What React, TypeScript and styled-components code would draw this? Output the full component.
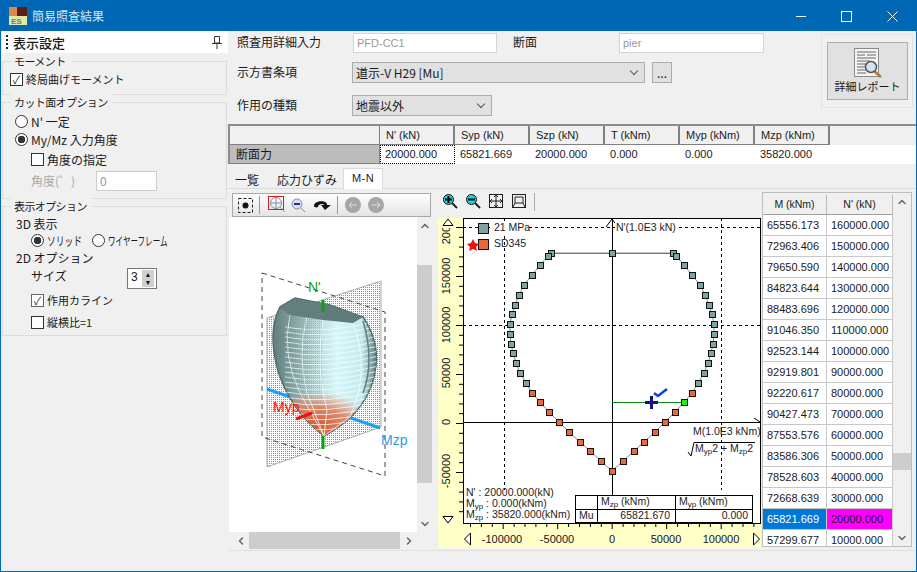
import React from 'react'
import styled, { createGlobalStyle } from 'styled-components'
import { ChevronDown, ChevronLeft, ChevronRight, ChevronUp } from 'lucide-react'

const GlobalStyle = createGlobalStyle`
  html, body {
    margin: 0;
    padding: 0;
    width: 917px;
    height: 572px;
    overflow: hidden;
    background: #f0f0f0;
  }
  * {
    box-sizing: border-box;
  }
`

const TEXT = '#1a1a1a'
const FONT = '"Noto Sans CJK JP", "Liberation Sans", sans-serif'
const LATIN = '"Liberation Sans", sans-serif'

const forces = ['20000.000', '65821.669', '20000.000', '0.000', '0.000', '35820.000']
const forceHeads = ["N' (kN)", 'Syp (kN)', 'Szp (kN)', 'T (kNm)', 'Myp (kNm)', 'Mzp (kNm)']
const rows = [
  ['65556.173', '160000.000'],
  ['72963.406', '150000.000'],
  ['79650.590', '140000.000'],
  ['84823.644', '130000.000'],
  ['88483.696', '120000.000'],
  ['91046.350', '110000.000'],
  ['92523.144', '100000.000'],
  ['92919.801', '90000.000'],
  ['92220.617', '80000.000'],
  ['90427.473', '70000.000'],
  ['87553.576', '60000.000'],
  ['83586.306', '50000.000'],
  ['78528.603', '40000.000'],
  ['72668.639', '30000.000'],
  ['65821.669', '20000.000'],
  ['57299.677', '10000.000'],
]

// interaction curve points, in page pixels read off the reference
const leftPts = [
  [551, 253], [548, 256], [540, 265], [532, 275], [524, 285], [519, 295], [515, 305], [512, 314],
  [510, 324], [510, 334], [511, 344], [513, 353], [516, 363], [520, 373], [526, 383],
]
const rightPts = [
  [673, 253], [676, 256], [684, 265], [692, 275], [700, 285], [705, 295], [709, 305], [712, 314],
  [714, 324], [714, 334], [713, 344], [711, 353], [708, 363], [704, 373], [698, 383],
]
const greyPts = [[612, 253], ...leftPts, ...rightPts]
const redPts = [
  [532, 393], [540, 402], [549, 412], [559, 422], [569, 432], [580, 442], [590, 451], [601, 461],
  [612, 471], [623, 461], [634, 451], [644, 442], [655, 432], [665, 422], [675, 412], [692, 393],
]
const outline = [
  ...leftPts.slice().reverse(),
  [673, 253],
  ...rightPts.slice(1),
  [692, 393], [684, 402], [675, 412], [665, 422], [655, 432], [644, 442], [634, 451], [623, 461], [612, 471],
  [601, 461], [590, 451], [580, 442], [569, 432], [559, 422], [549, 412], [540, 402], [532, 393], [526, 383],
]

const Sub = ({ children }: { children: React.ReactNode }) => (
  <tspan fontSize="8" dy="2">{children}</tspan>
)

const Diagram3D = () => (
  <svg width="170" height="210" viewBox="0 0 170 210">
    <defs>
      <pattern id="dots" width="2" height="2" patternUnits="userSpaceOnUse">
        <rect width="1" height="1" fill="#8c8c8c" />
      </pattern>
      <linearGradient id="body" x1="0" y1="0" x2="1" y2="0">
        <stop offset="0" stopColor="#5f7a7a" />
        <stop offset="0.22" stopColor="#8aa6a6" />
        <stop offset="0.42" stopColor="#bcdada" />
        <stop offset="0.62" stopColor="#d6f6f8" />
        <stop offset="0.86" stopColor="#c4eaec" />
        <stop offset="1" stopColor="#5f7e80" />
      </linearGradient>
      <radialGradient id="heat" cx="0.45" cy="0.75" r="0.7">
        <stop offset="0" stopColor="#d9552b" />
        <stop offset="0.55" stopColor="#e2704a" stopOpacity="0.8" />
        <stop offset="1" stopColor="#e8805a" stopOpacity="0" />
      </radialGradient>
      <clipPath id="bodyClip">
        <path d="M29 36 L44 27 L79 34 L112 46 Q128 70 125 95 Q120 140 73 165 Q40 140 27 100 Q16 60 29 36 Z" />
      </clipPath>
    </defs>
    <polygon points="16,47 130,10 130,156 16,196" fill="url(#dots)" stroke="#aaa" />
    <polyline points="11,2 134,41 134,205 11,166 11,2" fill="none" stroke="#444" strokeDasharray="5 4" />
    <line x1="16" y1="118" x2="129" y2="157" stroke="#1ea1ee" strokeWidth="3" />
    <path d="M29 36 L44 27 L79 34 L112 46 Q128 70 125 95 Q120 140 73 165 Q40 140 27 100 Q16 60 29 36 Z" fill="url(#body)" stroke="#50696a" strokeWidth="1.5" />
    <g clipPath="url(#bodyClip)">
      <rect x="30" y="118" width="80" height="50" fill="url(#heat)" />
      <g stroke="#f0ffff" fill="none" strokeWidth="0.8">
        {Array.from({ length: 21 }).map((_, i) => (
          <path key={i} d={`M34 ${56 + i * 5} Q72 ${64 + i * 5} 128 ${50 + i * 5}`} />
        ))}
        <path d="M39 44 Q30 82 49 122 L73 165" />
        <path d="M56 46 Q46 82 56 122 L73 165" />
        <path d="M72 49 Q64 100 76 139 L73 165" />
        <path d="M102 52 Q120 100 99 146 L73 165" />
      </g>
      <path d="M112 50 Q124 90 112 122" fill="none" stroke="#5f7e80" strokeWidth="1.5" />
      <path d="M29 37 L44 27 L79 34 L112 46 L102 52 L72 49 L39 44 Z" fill="#5f7b7a" />
      <rect x="16" y="27" width="56" height="100" fill="url(#dots)" opacity="0.45" />
    </g>
    <line x1="72" y1="29" x2="72" y2="41" stroke="#0ea012" strokeWidth="3" />
    <line x1="72" y1="165" x2="72" y2="178" stroke="#0ea012" strokeWidth="3" />
    <line x1="45" y1="148" x2="61" y2="142" stroke="#ee1111" strokeWidth="3" />
    <SvgLabel x="57" y="21" fill="#0ea012">N'</SvgLabel>
    <SvgLabel x="22" y="141" fill="#ee1111">Myp</SvgLabel>
    <SvgLabel x="130" y="174" fill="#1ea1ee">Mzp</SvgLabel>
  </svg>
)

const Chart = () => (
  <svg width="327" height="330" viewBox="434 218 327 330">
    <rect x="438" y="218" width="323" height="330" fill="#ffffc8" />
    <rect x="463.5" y="218.5" width="297" height="305" fill="#fff" stroke="#000" />
    {/* dashed grid */}
    <g stroke="#000" strokeDasharray="3 3">
      <line x1="463" y1="227.5" x2="760" y2="227.5" />
      <line x1="463" y1="325.5" x2="760" y2="325.5" />
      <line x1="504.5" y1="218" x2="504.5" y2="490" />
      <line x1="721.5" y1="218" x2="721.5" y2="490" />
    </g>
    {/* ticks */}
    <g stroke="#000">
      {Array.from({ length: 27 }).map((_, i) => (
        <line key={i} x1={470.5 + i * 10.9} y1="523" x2={470.5 + i * 10.9} y2={(i - 13) % 5 === 0 ? 529 : 527} />
      ))}
      {Array.from({ length: 30 }).map((_, i) => (
        <line key={i} x1={(i - 10) % 5 === 0 ? 456 : 459} y1={227.5 + i * 9.8} x2="463" y2={227.5 + i * 9.8} />
      ))}
    </g>
    {/* axes */}
    <g stroke="#000">
      <line x1="612.5" y1="218" x2="612.5" y2="523" />
      <line x1="463" y1="422.5" x2="760" y2="422.5" />
    </g>
    <path d="M606 227 L612 219 L618 227" fill="none" stroke="#000" />
    <path d="M754 418 L760 422" fill="none" stroke="#000" />
    <polyline points={outline.map(p => p.join(',')).join(' ')} stroke="#8a8a8a" fill="none" />
    <line x1="551" y1="253.5" x2="673" y2="253.5" stroke="#777" />
    {greyPts.map(([x, y], i) => (
      <Point key={i} x={x - 2.5} y={y - 2.5} fill="#7fa3a3" />
    ))}
    {redPts.map(([x, y], i) => (
      <Point key={i} x={x - 2.5} y={y - 2.5} fill="#e8693d" />
    ))}
    <line x1="612" y1="402.5" x2="684" y2="402.5" stroke="#0a8a0a" />
    <Point x="681.5" y="399.5" fill="#22ee22" />
    <path d="M645 402.5 H658 M651.5 396 V409" stroke="#10108c" strokeWidth="3" />
    <path d="M654 393 L658 396 L667 389" stroke="#1040e0" strokeWidth="2.5" fill="none" />
    {/* legend */}
    <rect x="478.5" y="223.5" width="10" height="10" fill="#7fa3a3" stroke="#111" />
    <rect x="478.5" y="239.5" width="10" height="10" fill="#e8693d" stroke="#111" />
    <polygon points="473,239 475,243 479,244 476,247 477,251 473,249 469,251 470,247 467,244 471,243" fill="#ee1111" />
    <LabelBack x="490" y="222" width="38" height="11" />
    <LabelBack x="615" y="222" width="64" height="11" />
    <ChartText x="494" y="231">21 MPa</ChartText>
    <ChartText x="494" y="247">SD345</ChartText>
    <ChartText x="616" y="231">N'(1.0E3 kN)</ChartText>
    <ChartText x="693" y="435">M(1.0E3 kNm)</ChartText>
    <ChartText x="695" y="452">
      M<Sub>yp</Sub><tspan dy="-2">2 + M</tspan><Sub>zp</Sub><tspan dy="-2">2</tspan>
    </ChartText>
    <path d="M688 452 L691 456 L694 442.5 H755" stroke="#000" fill="none" />
    <ChartText x="466" y="496">N' : 20000.000(kN)</ChartText>
    <ChartText x="466" y="507">
      M<Sub>yp</Sub><tspan dy="-2"> : 0.000(kNm)</tspan>
    </ChartText>
    <ChartText x="466" y="518">
      M<Sub>zp</Sub><tspan dy="-2"> : 35820.000(kNm)</tspan>
    </ChartText>
    {/* result table */}
    <rect x="575.5" y="495.5" width="177" height="27" fill="#fff" stroke="#000" />
    <path d="M575 509.5 H753 M597.5 495 V523 M675.5 495 V523" stroke="#000" />
    <ChartText x="601" y="505">
      M<Sub>zp</Sub><tspan dy="-2"> (kNm)</tspan>
    </ChartText>
    <ChartText x="679" y="505">
      M<Sub>yp</Sub><tspan dy="-2"> (kNm)</tspan>
    </ChartText>
    <ChartText x="579" y="519">Mu</ChartText>
    <ChartText x="670" y="519" textAnchor="end">65821.670</ChartText>
    <ChartText x="748" y="519" textAnchor="end">0.000</ChartText>
    {/* axis labels */}
    <AxisText x="612" y="543" textAnchor="middle">0</AxisText>
    <AxisText x="557" y="543" textAnchor="middle">-50000</AxisText>
    <AxisText x="666" y="543" textAnchor="middle">50000</AxisText>
    <AxisText x="502" y="543" textAnchor="middle">-100000</AxisText>
    <AxisText x="721" y="543" textAnchor="middle">100000</AxisText>
    {[
      ['200000', 226],
      ['150000', 276],
      ['100000', 325],
      ['50000', 373],
      ['0', 422],
      ['-50000', 471],
    ].map(([t, y]) => (
      <AxisText key={t} x="0" y="0" textAnchor="middle" transform={`translate(450 ${y}) rotate(-90)`}>
        {t}
      </AxisText>
    ))}
    <rect x="438" y="218" width="18" height="10" fill="#ffffc8" />
    {/* arrows */}
    <g fill="#fff" stroke="#000">
      <polygon points="443,225.5 453,225.5 448,219" />
      <polygon points="443,516.5 453,516.5 448,523" />
      <polygon points="470.5,533 464.5,539 470.5,545" />
      <polygon points="753.5,533 759.5,539 753.5,545" />
    </g>
  </svg>
)

const ToolIcon = ({ kind }: { kind: 'plus' | 'minus' }) => (
  <svg width="16" height="16" viewBox="0 0 16 16">
    <line x1="10" y1="10" x2="15" y2="15" stroke="#222" strokeWidth="2" />
    <circle cx="6.5" cy="6.5" r="5" fill="#20d0e0" stroke="#111" />
    <path d={kind === 'plus' ? 'M3 6.5H10M6.5 3V10' : 'M3 6.5H10'} stroke="#000" strokeWidth="2" />
  </svg>
)

export default function App() {
  return (
    <>
      <GlobalStyle />
      <Window>
        <TitleBar>
          <AppIcon>
            <svg width="18" height="18" viewBox="0 0 18 18">
              <rect width="18" height="18" fill="#5a1c14" />
              <rect x="0" y="0" width="8" height="9" fill="#d88a50" />
              <rect y="9" width="18" height="9" fill="#e8e6a0" />
              <IconText x="2" y="16.5">ES</IconText>
            </svg>
          </AppIcon>
          <TitleText>簡易照査結果</TitleText>
          <WinButtons>
            <svg width="136" height="30" viewBox="0 0 136 30" fill="none" stroke="#fff">
              <path d="M19 15.5H29" />
              <rect x="64.5" y="10.5" width="10" height="10" />
              <path d="M110.5 10.5L120.5 20.5M120.5 10.5L110.5 20.5" />
            </svg>
          </WinButtons>
        </TitleBar>
        <Body>
          <Side>
            <SideHead>
              <Grip />
              <SideTitle>表示設定</SideTitle>
              <svg width="10" height="14" viewBox="0 0 10 14" fill="none" stroke="#333">
                <path d="M2.5 1.5H7.5V8H2.5ZM0 8.5H10M5 9V14" />
              </svg>
            </SideHead>
            <Group $h={34}>
              <Legend>モーメント</Legend>
              <Line $indent={7} $top={0} $small>
                <Check>✓</Check>終局曲げモーメント
              </Line>
            </Group>
            <Group $h={97}>
              <Legend>カット面オプション</Legend>
              <Line $indent={12} $top={1}>
                <Radio />N' 一定
              </Line>
              <Line $indent={12} $top={0}>
                <Radio $on />My/Mz 入力角度
              </Line>
              <Line $indent={28} $top={1}>
                <Check />角度の指定
              </Line>
              <Line $indent={28} $top={3} $muted>
                <AngleLabel>角度(゜)</AngleLabel>
                <AngleInput>0</AngleInput>
              </Line>
            </Group>
            <Group $h={130}>
              <Legend>表示オプション</Legend>
              <Line $indent={13} $top={-1}>3D 表示</Line>
              <Line $indent={28} $top={-1.5}>
                <Radio $on />
                <Narrow $w={45} $sx={0.73}>ソリッド</Narrow>
                <Radio />
                <Narrow $w={62} $sx={0.63}>ワイヤーフレーム</Narrow>
              </Line>
              <Line $indent={13} $top={-1.5}>2D オプション</Line>
              <Line $indent={28} $top={2.5}>
                <SizeLabel>サイズ</SizeLabel>
                <Spin>
                  3
                  <SpinArrows>
                    <SpinArrow>▲</SpinArrow>
                    <SpinArrow>▼</SpinArrow>
                  </SpinArrows>
                </Spin>
              </Line>
              <Line $indent={28} $top={3.5} $small>
                <Check $muted>✓</Check>作用カライン
              </Line>
              <Line $indent={28} $top={3.5} $small>
                <Check />縦横比=1
              </Line>
            </Group>
          </Side>
          <Main>
            <Form>
              <FormRows>
                <FormRow $h={20} $top={0}>
                  <FieldLabel>照査用詳細入力</FieldLabel>
                  <Input $w={144}>PFD-CC1</Input>
                  <SecLabel>断面</SecLabel>
                  <Input $w={145}>pier</Input>
                </FormRow>
                <FormRow $h={21} $top={9}>
                  <FieldLabel>示方書条項</FieldLabel>
                  <Select $w={293}>
                    道示-V H29 [Mu]
                    <Chevron />
                  </Select>
                  <DotsButton>...</DotsButton>
                </FormRow>
                <FormRow $h={21} $top={12}>
                  <FieldLabel>作用の種類</FieldLabel>
                  <Select $w={140}>
                    地震以外
                    <Chevron />
                  </Select>
                </FormRow>
              </FormRows>
              <ReportBox>
                <ReportButton>
                  <svg width="30" height="30" viewBox="0 0 30 30">
                    <rect x="1.5" y="0.5" width="24" height="28" fill="#f4f4f4" stroke="#8a8a8a" />
                    <g stroke="#666">
                      <path d="M4 4H23M4 7H12M14 7H23M4 10H23M4 13H17M4 16H13M4 19H12M4 22H13M4 25H13" />
                    </g>
                    <line x1="21" y1="23" x2="28" y2="29" stroke="#b07830" strokeWidth="2.5" />
                    <circle cx="18" cy="19" r="5.5" fill="#cfe6f2" stroke="#555" strokeWidth="1.5" />
                  </svg>
                  <ReportText>詳細レポート</ReportText>
                </ReportButton>
              </ReportBox>
            </Form>
            <ForceGrid>
              <HeadRow>
                <RowHead $head />
                {forceHeads.map(h => (
                  <ColHead key={h}>{h}</ColHead>
                ))}
                <Filler />
              </HeadRow>
              <ValueRow>
                <RowHead>断面力</RowHead>
                {forces.map((f, i) => (
                  <ForceCell key={i} $focus={i === 0}>{f}</ForceCell>
                ))}
                <Filler $white />
              </ValueRow>
            </ForceGrid>
            <Tabs>
              <Tab>一覧</Tab>
              <Tab>応力ひずみ</Tab>
              <Tab $active>M-N</Tab>
            </Tabs>
            <Panes>
              <Pane3D>
                <Toolbar3D>
                  <svg width="186" height="20" viewBox="0 0 186 20" fill="none">
                    <rect x="5.5" y="3.5" width="14" height="14" stroke="#222" strokeDasharray="3 2" />
                    <circle cx="12.5" cy="10.5" r="3" fill="#111" />
                    <line x1="26.5" y1="1" x2="26.5" y2="19" stroke="#999" />
                    <circle cx="43" cy="8" r="5.5" stroke="#8090a8" />
                    <path d="M37 8H49M43 2V14M47 12L52 17" stroke="#8090a8" />
                    <rect x="35.5" y="1.5" width="15" height="13" stroke="#e01818" />
                    <circle cx="64" cy="9" r="5" fill="#dde" stroke="#8090a8" />
                    <path d="M61 9H67" stroke="#2030a0" strokeWidth="2" />
                    <path d="M68 13L72 17" stroke="#8090a8" />
                    <path d="M81 11C81 5 95 5 94 10L98 10L92 15L88 10H91C90 8 85 9 85 12C83 13 81 12 81 11Z" fill="#111" />
                    <line x1="104.5" y1="1" x2="104.5" y2="19" stroke="#999" />
                    <circle cx="120" cy="10" r="8" fill="#a6a6a6" />
                    <path d="M124 10H116M119 7L116 10L119 13" stroke="#ddd" />
                    <circle cx="143" cy="10" r="8" fill="#a6a6a6" />
                    <path d="M139 10H147M144 7L147 10L144 13" stroke="#ddd" />
                  </svg>
                </Toolbar3D>
                <View3D>
                  <Canvas3D>
                    <Diagram3D />
                  </Canvas3D>
                  <VScroll>
                    <ArrowBtn><ChevronUp size={12} strokeWidth={3} /></ArrowBtn>
                    <Thumb $h={218} $top={48} />
                    <ArrowBtnBottom><ChevronDown size={12} strokeWidth={3} /></ArrowBtnBottom>
                  </VScroll>
                </View3D>
                <HScroll>
                  <HArrow><ChevronLeft size={12} strokeWidth={3} /></HArrow>
                  <HThumb />
                  <HArrow><ChevronRight size={12} strokeWidth={3} /></HArrow>
                </HScroll>
              </Pane3D>
              <ChartPane>
                <ChartTools>
                  <ToolIcon kind="plus" />
                  <ToolIcon kind="minus" />
                  <svg width="16" height="16" viewBox="0 0 16 16" fill="none" stroke="#222">
                    <rect x="1.5" y="1.5" width="13" height="13" />
                    <path d="M8 2V14M2 8H14M6 4L8 2L10 4M6 12L8 14L10 12M4 6L2 8L4 10M12 6L14 8L12 10" />
                  </svg>
                  <svg width="16" height="16" viewBox="0 0 16 16" fill="none" stroke="#222">
                    <rect x="1.5" y="1.5" width="13" height="13" />
                    <path d="M4 4H12V10H4ZM4 10L2 14M12 10L14 14" />
                  </svg>
                  <ToolSep />
                </ChartTools>
                <Chart />
              </ChartPane>
              <TablePane>
                <TableScroll>
                  <Table>
                    <TableHead>
                      <HeadCell $w={64}>M (kNm)</HeadCell>
                      <HeadCell $w={66}>N' (kN)</HeadCell>
                    </TableHead>
                    {rows.map(([m, n], i) => (
                      <TableRow key={m}>
                        <Cell $w={64} $bg={i === 14 ? '#0078d7' : undefined} $fg={i === 14 ? '#fff' : undefined}>{m}</Cell>
                        <Cell $w={66} $bg={i === 14 ? '#ff00ff' : undefined}>{n}</Cell>
                      </TableRow>
                    ))}
                  </Table>
                  <VScroll $w={18}>
                    <ArrowBtn><ChevronUp size={12} strokeWidth={3} /></ArrowBtn>
                    <Thumb $h={17} $top={260} />
                    <ArrowBtnBottom><ChevronDown size={12} strokeWidth={3} /></ArrowBtnBottom>
                  </VScroll>
                </TableScroll>
              </TablePane>
            </Panes>
          </Main>
        </Body>
        <StatusBar />
      </Window>
    </>
  )
}

const SvgLabel = styled.text`
  font-family: ${LATIN};
  font-size: 14px;
`
const IconText = styled.text`
  font-family: ${LATIN};
  font-size: 8px;
  font-weight: 700;
  fill: #1a8fd8;
`
const ChartText = styled.text`
  font-family: ${LATIN};
  font-size: 10.5px;
  fill: #222;
`
const AxisText = styled.text`
  font-family: ${LATIN};
  font-size: 11px;
  fill: #14142a;
`
const Point = styled.rect.attrs({ width: 6, height: 6, stroke: '#111' })``
const LabelBack = styled.rect`
  fill: #fff;
`
const Window = styled.div`
  width: 917px;
  height: 572px;
  display: flex;
  flex-direction: column;
  background: #f0f0f0;
  border: 1px solid #0067b5;
  border-top: 0;
  font-family: ${FONT};
  font-size: 12px;
  color: ${TEXT};
`
const TitleBar = styled.div`
  height: 31px;
  flex: none;
  margin: 0 -1px;
  background: #0067b5;
  display: flex;
  align-items: center;
  padding-left: 9px;
  color: #d5e6f3;
`
const AppIcon = styled.div`
  width: 18px;
  height: 18px;
  display: flex;
`
const TitleText = styled.div`
  margin-left: 5px;
  font-size: 12px;
`
const WinButtons = styled.div`
  margin-left: auto;
  display: flex;
  margin-right: 4px;
`
const Body = styled.div`
  height: 519px;
  flex: none;
  display: flex;
`
const Side = styled.div`
  width: 227px;
  flex: none;
  display: flex;
  flex-direction: column;
`
const SideHead = styled.div`
  height: 22px;
  background: #fff;
  display: flex;
  align-items: center;
  padding: 0 6px 0 4px;
  margin-left: 1px;
  flex: none;
`
const Grip = styled.div`
  width: 2px;
  height: 14px;
  background: repeating-linear-gradient(#222 0 2px, transparent 2px 4px);
`
const SideTitle = styled.div`
  margin-left: 5px;
  font-size: 13px;
  font-weight: 500;
  flex: 1;
`
const Group = styled.div<{ $h: number }>`
  position: relative;
  height: ${p => p.$h}px;
  margin: 8px 1px 0 1px;
  padding-top: 8px;
  border: 1px solid #dcdcdc;
  flex: none;
  & + & {
    margin-top: 7px;
  }
`
const Legend = styled.div`
  position: absolute;
  top: -9px;
  left: 8px;
  padding: 0 5px 0 3px;
  background: #f0f0f0;
  line-height: 17px;
  font-size: 11px;
  letter-spacing: -0.6px;
`
const Line = styled.div<{ $indent: number; $top: number; $muted?: boolean; $small?: boolean }>`
  display: flex;
  align-items: center;
  height: 18.5px;
  padding-left: ${p => p.$indent}px;
  margin-top: ${p => p.$top}px;
  color: ${p => (p.$muted ? '#a8a8a8' : TEXT)};
  font-size: ${p => (p.$small ? '11px' : '12px')};
  white-space: nowrap;
`
const Check = styled.span<{ $muted?: boolean }>`
  width: 13px;
  height: 13px;
  flex: none;
  border: 1px solid ${p => (p.$muted ? '#666' : '#333')};
  background: #fff;
  margin-right: 3px;
  font-size: 11px;
  line-height: 11px;
  text-align: center;
  color: #333;
`
const Radio = styled.span<{ $on?: boolean }>`
  width: 13px;
  height: 13px;
  border-radius: 50%;
  border: 1px solid #333;
  background: ${p => (p.$on ? 'radial-gradient(circle, #333 0 3.5px, #fff 4px)' : '#fff')};
  margin-right: 3px;
  flex: none;
`
const Narrow = styled.span<{ $w: number; $sx: number }>`
  display: inline-block;
  width: ${p => p.$w}px;
  transform: scaleX(${p => p.$sx});
  transform-origin: left center;
`
const AngleLabel = styled.span`
  width: 65px;
`
const AngleInput = styled.span`
  width: 61px;
  height: 20px;
  background: #fff;
  border: 1px solid #ccc;
  padding-left: 3px;
  line-height: 18px;
  color: #999;
`
const SizeLabel = styled.span`
  width: 96px;
  margin-top: -6px;
`
const Spin = styled.span`
  width: 30px;
  height: 21px;
  background: #fff;
  border: 1px solid #777;
  display: flex;
  justify-content: space-between;
  padding: 0 2px 0 3px;
  line-height: 16px;
  font-family: ${LATIN};
  flex: none;
`
const SpinArrows = styled.span`
  width: 12px;
  display: flex;
  flex-direction: column;
  padding-top: 1px;
`
const SpinArrow = styled.span`
  height: 8.5px;
  background: #d0d0d0;
  font-size: 7px;
  line-height: 9px;
  text-align: center;
  overflow: hidden;
`
const Main = styled.div`
  flex: 1;
  min-width: 0;
  display: flex;
  flex-direction: column;
`
const Form = styled.div`
  height: 93px;
  flex: none;
  display: flex;
  justify-content: space-between;
`
const FormRows = styled.div`
  padding: 2px 0 0 9px;
  display: flex;
  flex-direction: column;
`
const FormRow = styled.div<{ $h: number; $top: number }>`
  display: flex;
  align-items: center;
  height: ${p => p.$h}px;
  margin-top: ${p => p.$top}px;
`
const FieldLabel = styled.div`
  width: 115px;
  margin-top: -3px;
`
const Input = styled.div<{ $w: number }>`
  width: ${p => p.$w}px;
  height: 20px;
  margin-left: 1px;
  background: #fff;
  border: 1px solid #d4d4d4;
  color: #999;
  padding-left: 3px;
  line-height: 18px;
  font-family: ${LATIN};
  font-size: 11px;
`
const SecLabel = styled.div`
  width: 121px;
  padding-left: 16px;
  margin-top: -3px;
`
const Select = styled.div<{ $w: number }>`
  width: ${p => p.$w}px;
  height: 21px;
  background: #e1e1e1;
  border: 1px solid #adadad;
  padding-left: 3px;
  line-height: 19px;
  position: relative;
`
const Chevron = styled.span`
  position: absolute;
  right: 7px;
  top: 5px;
  width: 6px;
  height: 6px;
  border-right: 1px solid #555;
  border-bottom: 1px solid #555;
  transform: rotate(45deg);
`
const DotsButton = styled.div`
  width: 20px;
  height: 21px;
  margin-left: 7px;
  background: #e1e1e1;
  border: 1px solid #adadad;
  text-align: center;
  line-height: 19px;
`
const ReportBox = styled.div`
  width: 92px;
  height: 74px;
  margin: 3px 3px 0 0;
  border: 1px solid #e2e2e2;
  padding: 7px 0 0 5px;
`
const ReportButton = styled.div`
  width: 81px;
  height: 58px;
  background: #e1e1e1;
  border: 1px solid #adadad;
  display: flex;
  flex-direction: column;
  align-items: center;
  padding-top: 5px;
`
const ReportText = styled.div`
  font-size: 11px;
  line-height: 16px;
  white-space: nowrap;
`
const ForceGrid = styled.div`
  height: 40px;
  flex: none;
  border-top: 2px solid #8c8c8c;
  border-left: 2px solid #8c8c8c;
`
const HeadRow = styled.div`
  display: flex;
  height: 19px;
`
const ValueRow = styled.div`
  display: flex;
  height: 19px;
`
const RowHead = styled.div<{ $head?: boolean }>`
  width: 150px;
  flex: none;
  background: ${p => (p.$head ? '#f0f0f0' : '#bcbcbc')};
  border-right: 1px solid #808080;
  border-bottom: 1px solid #808080;
  padding-left: 6px;
  line-height: 17px;
`
const ColHead = styled.div`
  width: 75px;
  flex: none;
  background: #f0f0f0;
  border-right: 2px solid #808080;
  border-bottom: 1px solid #808080;
  padding-left: 6px;
  line-height: 18px;
  font-family: ${LATIN};
  font-size: 11px;
`
const ForceCell = styled.div<{ $focus?: boolean }>`
  width: 75px;
  flex: none;
  background: #fff;
  padding-left: 5px;
  line-height: 18px;
  font-family: ${LATIN};
  font-size: 11px;
  outline: ${p => (p.$focus ? '1px dotted #000' : 'none')};
  outline-offset: -1px;
`
const Filler = styled.div<{ $white?: boolean }>`
  flex: 1;
  background: ${p => (p.$white ? '#fff' : '#f0f0f0')};
`
const Tabs = styled.div`
  height: 21px;
  flex: none;
  margin-top: 4px;
  display: flex;
  padding-left: 1px;
  border-bottom: 1px solid #dadada;
`
const Tab = styled.div<{ $active?: boolean }>`
  padding: 0 ${p => (p.$active ? '8px' : '6px')};
  line-height: 19px;
  background: ${p => (p.$active ? '#fff' : 'transparent')};
  border: ${p => (p.$active ? '1px solid #dadada' : 'none')};
  border-bottom: 0;
  height: 21px;
  padding-top: ${p => (p.$active ? '0' : '2px')};
  font-family: ${p => (p.$active ? LATIN : FONT)};
  font-size: ${p => (p.$active ? '11px' : '12px')};
  letter-spacing: ${p => (p.$active ? '0.4px' : '0')};
  &:first-child {
    margin-right: 6px;
  }
`
const Panes = styled.div`
  height: 361px;
  flex: none;
  display: flex;
`
const Pane3D = styled.div`
  width: 206px;
  flex: none;
  display: flex;
  flex-direction: column;
`
const Toolbar3D = styled.div`
  height: 24px;
  margin: 4px 0 0 4px;
  width: 199px;
  flex: none;
  border: 1px solid #a8a8a8;
  background: linear-gradient(#fff, #e4e4e4);
  display: flex;
  align-items: center;
`
const View3D = styled.div`
  height: 315px;
  display: flex;
  flex: none;
  padding-left: 1px;
`
const Canvas3D = styled.div`
  width: 188px;
  background: #fff;
  padding: 54px 0 0 22px;
  overflow: hidden;
`
const VScroll = styled.div<{ $w?: number }>`
  width: ${p => p.$w ?? 15}px;
  position: relative;
  background: #f0f0f0;
  flex: none;
`
const ArrowBtn = styled.div`
  height: 17px;
  display: flex;
  align-items: center;
  justify-content: center;
  color: #666;
`
const ArrowBtnBottom = styled(ArrowBtn)`
  position: absolute;
  bottom: 0;
  left: 0;
  right: 0;
`
const Thumb = styled.div<{ $h: number; $top: number }>`
  position: absolute;
  left: 0;
  right: 0;
  top: ${p => p.$top}px;
  height: ${p => p.$h}px;
  background: #cdcdcd;
`
const HScroll = styled.div`
  height: 17px;
  flex: none;
  display: flex;
  align-items: center;
  margin-left: 4px;
  width: 185px;
  background: #f0f0f0;
`
const HArrow = styled.div`
  width: 17px;
  display: flex;
  justify-content: center;
  color: #666;
`
const HThumb = styled.div`
  flex: 1;
  height: 17px;
  background: #cdcdcd;
`
const ChartPane = styled.div`
  width: 327px;
  flex: none;
  display: flex;
  flex-direction: column;
`
const ChartTools = styled.div`
  height: 29px;
  display: flex;
  align-items: flex-start;
  gap: 7px;
  padding: 4px 0 0 8px;
  flex: none;
`
const ToolSep = styled.div`
  width: 1px;
  height: 18px;
  background: #aaa;
`
const TablePane = styled.div`
  flex: 1;
  padding: 3px 0 0 1px;
`
const TableScroll = styled.div`
  display: flex;
  width: 150px;
  height: 355px;
  border: 1px solid #bdbdbd;
  background: #fff;
  overflow: hidden;
`
const Table = styled.div`
  width: 130px;
  flex: none;
`
const TableHead = styled.div`
  display: flex;
  height: 22px;
  padding-top: 2px;
  background: #f0f0f0;
  border-bottom: 1px solid #a0a0a0;
`
const HeadCell = styled.div<{ $w: number }>`
  width: ${p => p.$w}px;
  text-align: center;
  line-height: 19px;
  border-right: 1px solid #bbb;
  font-family: ${LATIN};
  font-size: 10.5px;
`
const TableRow = styled.div`
  display: flex;
  height: 21px;
  border-bottom: 1px solid #c8c8c8;
`
const Cell = styled.div<{ $w: number; $bg?: string; $fg?: string }>`
  width: ${p => p.$w}px;
  padding-left: 4px;
  line-height: 20px;
  border-right: 1px solid #c8c8c8;
  background: ${p => p.$bg ?? '#fff'};
  color: ${p => p.$fg ?? TEXT};
  font-family: ${LATIN};
  font-size: 11px;
`
const StatusBar = styled.div`
  height: 21px;
  flex: none;
  border-top: 1px solid #e0e0e0;
  margin-left: 228px;
`
